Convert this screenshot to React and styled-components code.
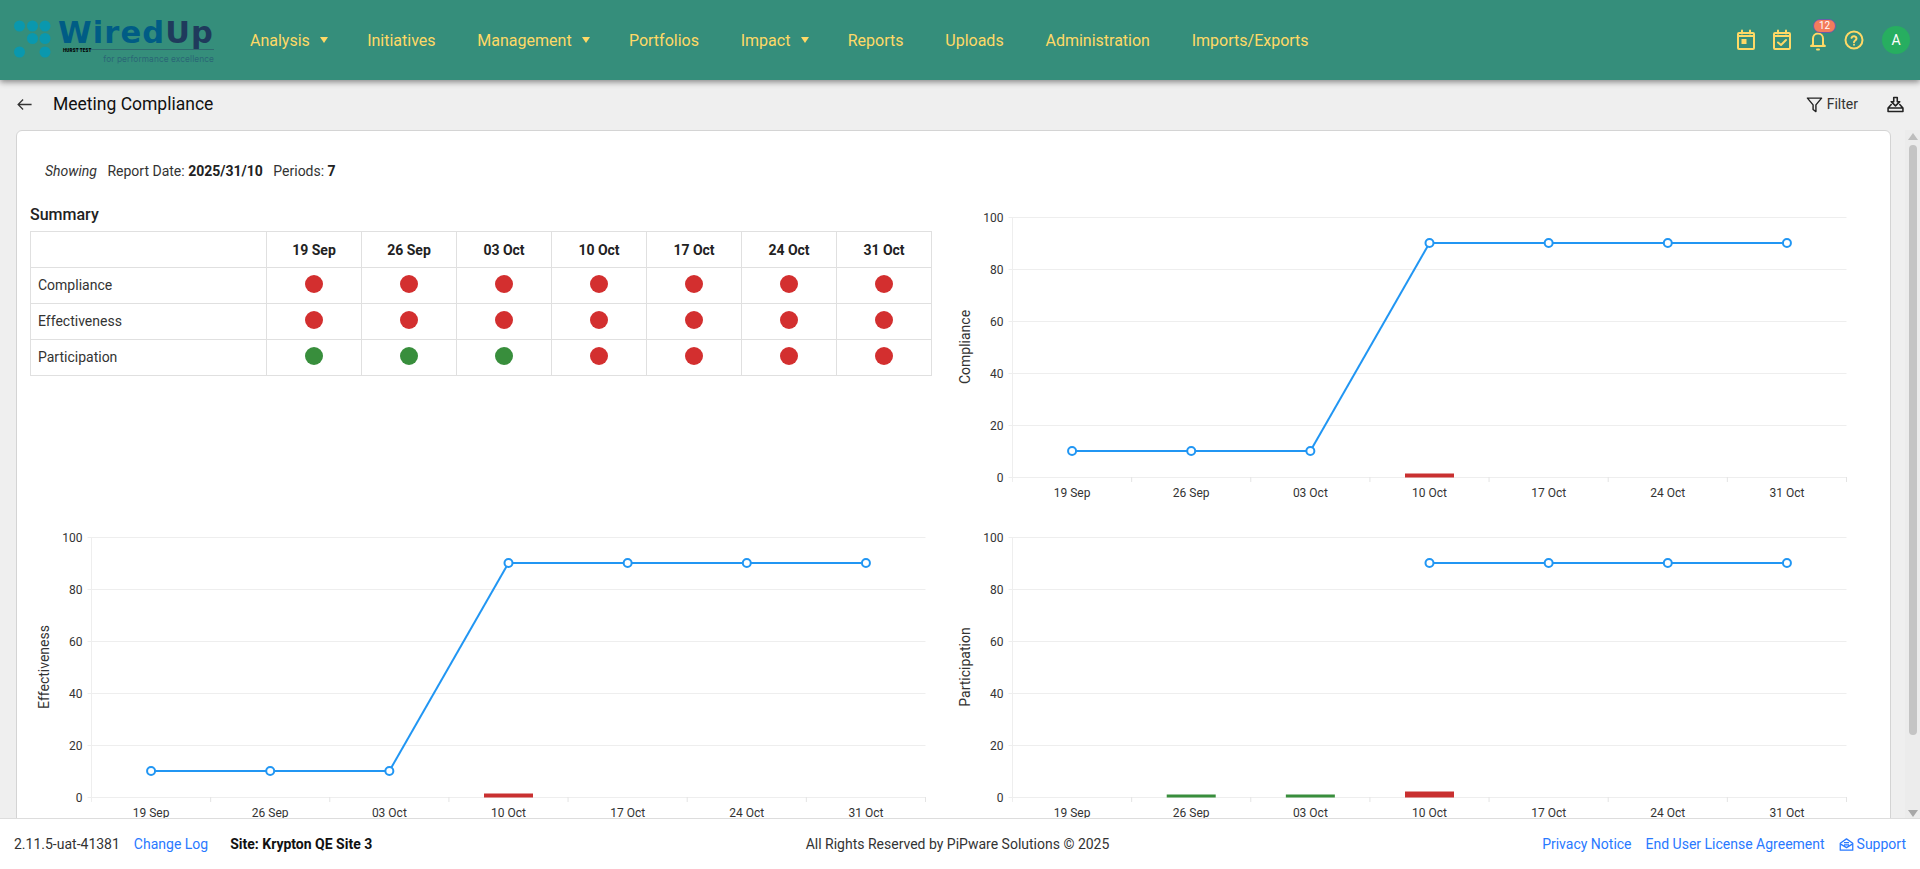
import React from "react";
import styled, { createGlobalStyle } from "styled-components";

const Global = createGlobalStyle`
  html, body { margin: 0; padding: 0; height: 100%; overflow: hidden; }
  body { font-family: Roboto, "Liberation Sans", sans-serif; color: #212529; background: #efefef; }
  * { box-sizing: border-box; }
`;

const Page = styled.div`display:flex;flex-direction:column;height:100vh;overflow:hidden;`;
const Header = styled.header`
  height:80px;flex:none;background:#358e7b;display:flex;align-items:center;padding:0 10px 0 12px;
  box-shadow:0 2px 6px rgba(0,0,0,.45);position:relative;z-index:2;
`;
const Logo = styled.div`width:208px;height:54px;flex:none;display:flex;gap:1px;position:relative;align-self:flex-start;margin-top:16px;`;
const Dots = styled.svg`width:44px;height:44px;flex:none;margin-top:4px;`;
const LogoText = styled.div`display:flex;flex-direction:column;align-items:flex-end;width:157px;`;
const LogoWord = styled.div`
  font-family:"DejaVu Sans",sans-serif;font-weight:700;font-size:30.5px;line-height:33px;letter-spacing:1.1px;color:#005c85;white-space:nowrap;
  span{color:#1f3a5c;}
`;
const LogoRule = styled.div`width:149px;height:1px;background:#2f6a6e;`;
const LogoTag = styled.div`font-size:8.3px;line-height:14px;margin-top:2px;color:#2a6676;font-family:Inter,sans-serif;letter-spacing:.1px;white-space:nowrap;`;
const LogoEnv = styled.div`position:absolute;left:51px;top:32px;font-size:4.5px;line-height:6px;font-weight:900;color:#000;letter-spacing:.2px;white-space:nowrap;`;
const Nav = styled.nav`display:flex;align-items:center;gap:41.8px;margin-left:30px;flex:1;`;
const NavItem = styled.a`color:#ffd966;font-size:16px;display:flex;align-items:center;gap:10.5px;`;
const Caret = styled.i`width:0;height:0;border:4.5px solid transparent;border-top:6px solid #ffd966;border-bottom:0;margin-right:-3px;`;
const HeaderIcons = styled.div`display:flex;align-items:center;gap:12px;color:#ffd966;`;
const IconBtn = styled.div`position:relative;width:24px;height:24px;display:flex;align-items:center;justify-content:center;`;
const Badge = styled.span`
  position:absolute;left:7px;top:-9px;width:23px;height:14px;border-radius:8px;background:#f47c5c;border:1px solid #6a5aa8;
  color:#fff;font-size:10px;line-height:12px;text-align:center;
`;
const Avatar = styled.div`width:28px;height:28px;border-radius:50%;background:#27ae60;color:#fff;font-size:14px;display:flex;align-items:center;justify-content:center;margin-left:4px;`;

const TitleBar = styled.div`height:50px;flex:none;display:flex;align-items:center;padding:0 16px 2px;`;
const BackBtn = styled.div`width:36px;display:flex;align-items:center;`;
const Title = styled.h1`font-size:17.5px;font-weight:400;margin:0 0 0 1px;color:#111;flex:1;`;
const FilterBtn = styled.div`display:flex;align-items:center;gap:4px;font-size:14px;color:#333;margin-right:29px;`;

const Body = styled.div`flex:1;min-height:0;display:flex;overflow:hidden;`;
const Scroll = styled.div`flex:1;min-width:0;padding:0 14px 0 16px;overflow:hidden;`;
const Card = styled.section`background:#fff;border:1px solid #d4d4d4;border-radius:6px 6px 0 0;height:760px;padding:30px 13px 0;`;
const Showing = styled.div`font-size:14px;line-height:20px;padding-left:15px;display:flex;gap:10.5px;color:#333;
  em{font-style:italic;} b{font-weight:700;color:#222;}`;
const Grid = styled.div`display:grid;grid-template-columns:921px 921px;margin-top:14px;`;
const Cell = styled.div`height:320px;`;
const SummaryTitle = styled.h2`font-size:16px;font-weight:500;line-height:20px;margin:10px 0 6px;color:#222;`;
const Table = styled.table`border-collapse:collapse;table-layout:fixed;width:901px;font-size:14px;
  th,td{border:1px solid #e0e0e0;height:36px;padding:0;text-align:center;}
  th{font-weight:700;color:#222;font-size:14px;}
  td:first-child{text-align:left;padding:0 0 1px 7px;color:#333;}
`;
const LabelCol = styled.col`width:236px;`;
const DateCol = styled.col`width:95px;`;
const Dot = styled.span`display:block;width:18px;height:18px;border-radius:50%;margin:-4px auto 0;background:${p => p.$good ? "#388e3c" : "#d32f2f"};`;
const ChartSvg = styled.svg`display:block;width:920px;height:320px;font-family:Roboto,sans-serif;`;

const Track = styled.div`width:15px;flex:none;background:#ececec;display:flex;flex-direction:column;align-items:center;padding:3px 0 1px;`;
const ArrowUp = styled.i`width:0;height:0;border:5px solid transparent;border-bottom:7px solid #bdbdbd;border-top:0;`;
const ArrowDown = styled.i`width:0;height:0;border:5px solid transparent;border-top:7px solid #a8a8a8;border-bottom:0;margin-top:auto;`;
const Thumb = styled.div`width:8px;height:590px;margin-top:5px;background:#c4c4c4;border-radius:4px;`;

const Footer = styled.footer`height:51px;flex:none;background:#fff;border-top:1px solid #ddd;display:grid;grid-template-columns:1fr auto 1fr;align-items:center;padding:0 14px;font-size:14px;color:#333;position:relative;z-index:1;`;
const FootLeft = styled.div`display:flex;gap:14px;`;
const FootCenter = styled.div`margin-right:5px;`;
const FootRight = styled.div`display:flex;gap:14px;justify-content:flex-end;`;
const FootLink = styled.a`color:#2979ff;display:inline-flex;align-items:center;gap:3px;`;
const Site = styled.b`font-weight:700;color:#111;margin-left:8px;`;

const dates = ["19 Sep","26 Sep","03 Oct","10 Oct","17 Oct","24 Oct","31 Oct"];
const summary = [
  ["Compliance",[0,0,0,0,0,0,0]],
  ["Effectiveness",[0,0,0,0,0,0,0]],
  ["Participation",[1,1,1,0,0,0,0]],
];

function Chart({ label, values, bars, left = 61.5, top = 22 }) {
  const w = 834, h = 260, step = w / 7;
  const X = i => left + step * (i + 0.5);
  const Y = v => top + h - (v / 100) * h;
  const segs = [];
  values.forEach((v, i) => {
    if (v != null && values[i - 1] != null) segs.push(<line key={i} x1={X(i-1)} y1={Y(values[i-1])} x2={X(i)} y2={Y(v)} stroke="#2196f3" strokeWidth="2" />);
  });
  return (
    <ChartSvg viewBox="0 0 920 320">
      {[0,20,40,60,80,100].map(t => (
        <g key={t}>
          <line x1={left-4} x2={left+w} y1={Y(t)+.5} y2={Y(t)+.5} stroke="#eee" />
          <text x={left-9} y={Y(t)+4.5} textAnchor="end" fontSize="12" fill="#333">{t}</text>
        </g>
      ))}
      <line x1={left} x2={left} y1={top} y2={top+h+5} stroke="#eee" />
      {dates.map((d,i) => (
        <g key={d}>
          <line x1={left+step*(i+1)} x2={left+step*(i+1)} y1={top+h} y2={top+h+5} stroke="#e4e4e4" />
          <text x={X(i)} y={top+h+20} textAnchor="middle" fontSize="12" fill="#333">{d}</text>
        </g>
      ))}
      <text transform={`translate(${left-43},${top+h/2}) rotate(-90)`} textAnchor="middle" fontSize="14" fill="#333">{label}</text>
      {bars.map(b => <rect key={b.i} x={X(b.i)-24.5} y={top+h-b.h+.5} width="49" height={b.h} fill={b.c} />)}
      {segs}
      {values.map((v,i) => v != null && <circle key={i} cx={X(i)} cy={Y(v)} r="4" fill="#fff" stroke="#2196f3" strokeWidth="2" />)}
    </ChartSvg>
  );
}

const I = ({children, s=24}) => <svg width={s} height={s} viewBox="0 0 24 24" fill="none" stroke="currentColor" strokeWidth="2" strokeLinecap="round" strokeLinejoin="round">{children}</svg>;

export default function App() {
  const line = [10,10,10,90,90,90,90];
  return (
    <Page>
      <Global />
      <Header>
        <Logo>
          <Dots viewBox="0 0 44 44">
            {[[7.5,6],[20.5,6],[33,6],[20.5,18.500],[33,18.500],[7.5,32],[33,32]].map(([x,y]) => <circle key={x+"-"+y} cx={x} cy={y} r="5.5" fill="#0a98ae" />)}
          </Dots>
          <LogoText>
            <LogoWord>Wired<span>Up</span></LogoWord>
            <LogoRule />
            <LogoTag>for performance excellence</LogoTag>
          </LogoText>
          <LogoEnv>HURST TEST</LogoEnv>
        </Logo>
        <Nav>
          <NavItem>Analysis <Caret /></NavItem>
          <NavItem>Initiatives</NavItem>
          <NavItem>Management <Caret /></NavItem>
          <NavItem>Portfolios</NavItem>
          <NavItem>Impact <Caret /></NavItem>
          <NavItem>Reports</NavItem>
          <NavItem>Uploads</NavItem>
          <NavItem>Administration</NavItem>
          <NavItem>Imports/Exports</NavItem>
        </Nav>
        <HeaderIcons>
          <IconBtn><I><rect x="4" y="5" width="16" height="16" rx="1"/><path d="M8 2.5v3M16 2.5v3M4 8h16"/><rect x="7.5" y="11" width="5" height="5" fill="currentColor" stroke="none"/></I></IconBtn>
          <IconBtn><I><rect x="4" y="5" width="16" height="16" rx="1"/><path d="M8 2.5v3M16 2.5v3M4 8h16M8 14.500l3 2.500 5-5"/></I></IconBtn>
          <IconBtn><I><path d="M7 16.500V10.500a5 5 0 0 1 10 0v6l2 1.500H5l2-1.500Z"/><path d="M11 21.500h2"/></I><Badge>12</Badge></IconBtn>
          <IconBtn><I><circle cx="12" cy="12" r="8.5"/><path d="M9.500 9.800a2.600 2.600 0 0 1 5 .8c0 1.800-2.500 2-2.500 3.700"/><path d="M12 16.800h.01"/></I></IconBtn>
          <Avatar>A</Avatar>
        </HeaderIcons>
      </Header>
      <TitleBar>
        <BackBtn><svg width="17" height="17" viewBox="0 0 24 24" fill="none" stroke="#333" strokeWidth="1.8"><path d="M22 12H3M10 5l-7 7 7 7"/></svg></BackBtn>
        <Title>Meeting Compliance</Title>
        <FilterBtn><svg width="17" height="17" viewBox="0 0 24 24" fill="none" stroke="#222" strokeWidth="2" strokeLinejoin="round"><path d="M2 3h20l-8 9.500V22l-4-3v-6.500L2 3Z"/></svg>Filter</FilterBtn>
        <svg width="17" height="17" viewBox="0 0 24 24" fill="none" stroke="#222" strokeWidth="2.2" strokeLinejoin="round" strokeLinecap="round"><path d="M9.500 2h5v6H18l-6 6-6-6h3.500V2Z"/><path d="M6 12 1.500 17v5h21v-5L18 12M1.500 17h21"/></svg>
      </TitleBar>
      <Body>
        <Scroll>
          <Card>
            <Showing><em>Showing</em><span>Report Date: <b>2025/31/10</b></span><span>Periods: <b>7</b></span></Showing>
            <Grid>
              <Cell>
                <SummaryTitle>Summary</SummaryTitle>
                <Table>
                  <colgroup><LabelCol />{dates.map(d => <DateCol key={d} />)}</colgroup>
                  <thead><tr><th />{dates.map(d => <th key={d}>{d}</th>)}</tr></thead>
                  <tbody>
                    {summary.map(([n,v]) => <tr key={n}><td>{n}</td>{v.map((g,i) => <td key={i}><Dot $good={g} /></td>)}</tr>)}
                  </tbody>
                </Table>
              </Cell>
              <Cell>
                <Chart label="Compliance" values={line} bars={[{i:3,h:4,c:"#c93030"}]} />
              </Cell>
              <Cell>
                <Chart label="Effectiveness" values={line} bars={[{i:3,h:4,c:"#c93030"}]} />
              </Cell>
              <Cell>
                <Chart label="Participation" values={[null,null,null,90,90,90,90]} bars={[{i:1,h:3,c:"#388e3c"},{i:2,h:3,c:"#388e3c"},{i:3,h:6,c:"#c93030"}]} />
              </Cell>
            </Grid>
          </Card>
        </Scroll>
        <Track><ArrowUp /><Thumb /><ArrowDown /></Track>
      </Body>
      <Footer>
        <FootLeft><span>2.11.5-uat-41381</span><FootLink>Change Log</FootLink><Site>Site: Krypton QE Site 3</Site></FootLeft>
        <FootCenter>All Rights Reserved by PiPware Solutions © 2025</FootCenter>
        <FootRight><FootLink>Privacy Notice</FootLink><FootLink>End User License Agreement</FootLink>
          <FootLink><svg width="15" height="15" viewBox="0 0 24 24" fill="none" stroke="currentColor" strokeWidth="2" strokeLinejoin="round"><path d="M2 10 12 3l10 7v11H2V10Z"/><path d="m2 11 10 6 10-6M8 9h8M8 12.500h8"/></svg>Support</FootLink>
        </FootRight>
      </Footer>
    </Page>
  );
}
